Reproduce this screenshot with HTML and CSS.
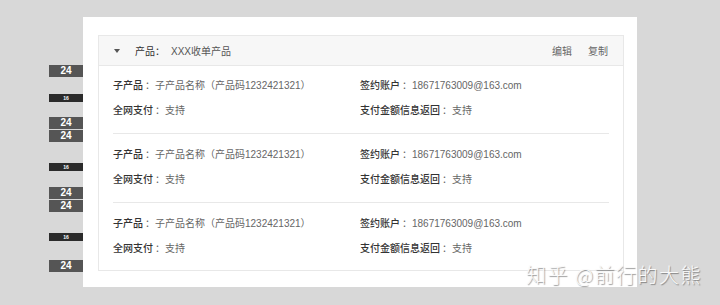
FILE: index.html
```html
<!DOCTYPE html>
<html lang="zh-CN">
<head>
    <meta charset="UTF-8">
    <meta name="viewport" content="width=device-width, initial-scale=1.0">
    <title>收单产品</title>
    <link rel="stylesheet" href="styles.css">
</head>
<body>
    <div class="page">
        <!-- 标注 -->
        <div class="marks">
            <span class="mark">24</span>
            <span class="mark small m17">16</span>
            <span class="mark m15">24</span>
            <span class="mark m1">24</span>
            <span class="mark small m21">16</span>
            <span class="mark m16">24</span>
            <span class="mark m1">24</span>
            <span class="mark small m21">16</span>
            <span class="mark m19">24</span>
        </div>

        <div class="card">
            <div class="panel">
                <div class="panel-head">
                    <span class="caret"></span>
                    <span class="head-label">产品：</span>
                    <span class="head-value">XXX收单产品</span>
                    <div class="actions">
                        <a>编辑</a>
                        <a>复制</a>
                    </div>
                </div>

                <div class="panel-body">
                    <div class="group">
                        <div class="field"><b>子产品</b><span class="sep">：</span>子产品名称（产品码1232421321）</div>
                        <div class="field"><b>签约账户</b><span class="sep">：</span>18671763009@163.com</div>
                        <div class="field"><b>全网支付</b><span class="sep">：</span>支持</div>
                        <div class="field"><b>支付金额信息返回</b><span class="sep">：</span>支持</div>
                    </div>
                    <div class="group">
                        <div class="field"><b>子产品</b><span class="sep">：</span>子产品名称（产品码1232421321）</div>
                        <div class="field"><b>签约账户</b><span class="sep">：</span>18671763009@163.com</div>
                        <div class="field"><b>全网支付</b><span class="sep">：</span>支持</div>
                        <div class="field"><b>支付金额信息返回</b><span class="sep">：</span>支持</div>
                    </div>
                    <div class="group">
                        <div class="field"><b>子产品</b><span class="sep">：</span>子产品名称（产品码1232421321）</div>
                        <div class="field"><b>签约账户</b><span class="sep">：</span>18671763009@163.com</div>
                        <div class="field"><b>全网支付</b><span class="sep">：</span>支持</div>
                        <div class="field"><b>支付金额信息返回</b><span class="sep">：</span>支持</div>
                    </div>
                </div>
            </div>
        </div>

        <div class="watermark">知乎 @前行的大熊</div>
    </div>
</body>
</html>
```

FILE: styles.css
```css
body {
    margin: 0;
    padding: 0;
    background-color: #d8d8d8;
    font-family: 'Liberation Sans', 'Noto Sans CJK SC', sans-serif;
    color: #666;
}
.page {
    position: relative;
    display: flex;
    align-items: flex-start;
    width: 720px;
    height: 305px;
    padding: 17px 0 0 49px;
    box-sizing: border-box;
}
/* 标注块 */
.marks {
    display: flex;
    flex-direction: column;
    width: 34px;
    margin-top: 48px;
}
.mark {
    display: block;
    height: 12px;
    line-height: 12px;
    background-color: #555;
    color: #fff;
    font-size: 10px;
    font-weight: bold;
    text-align: center;
}
.mark.small {
    height: 8px;
    line-height: 8px;
    font-size: 5px;
    background-color: #2b2b2b;
}
.m1 { margin-top: 1px; }
.m15 { margin-top: 15px; }
.m16 { margin-top: 16px; }
.m17 { margin-top: 17px; }
.m19 { margin-top: 19px; }
.m21 { margin-top: 21px; }

.card {
    width: 554px;
    height: 270px;
    padding: 18px 13px 0 15px;
    background-color: #fff;
    box-sizing: border-box;
}
.panel {
    border: 1px solid #e8e8e8;
}
.panel-head {
    display: flex;
    align-items: center;
    height: 29px;
    padding: 0 15px;
    background-color: #f7f7f7;
    border-bottom: 1px solid #e8e8e8;
    font-size: 10px;
}
.caret {
    width: 0;
    height: 0;
    border-left: 3.5px solid transparent;
    border-right: 3.5px solid transparent;
    border-top: 4px solid #555;
    margin-right: 15px;
}
.head-label {
    color: #333;
    margin-right: 6px;
}
.head-value {
    color: #555;
}
.actions {
    margin-left: auto;
    display: flex;
    gap: 16px;
}
.actions a {
    color: #666;
    cursor: pointer;
}
.panel-body {
    padding: 0 14px;
}
.group {
    display: grid;
    grid-template-columns: 247px 1fr;
    row-gap: 11px;
    padding: 14px 0 15px;
    border-bottom: 1px solid #e8e8e8;
    font-size: 10px;
    line-height: 14px;
}
.group:first-child {
    padding-top: 13px;
}
.group:last-child {
    border-bottom: none;
    padding-bottom: 14px;
}
.field {
    color: #666;
    white-space: nowrap;
}
.field b {
    color: #333;
    font-weight: 500;
}
/* 冒号稍微居中 */
.field .sep {
    padding-left: 2px;
}

.watermark {
    position: absolute;
    left: 526px;
    top: 262px;
    font-size: 20px;
    line-height: 26px;
    letter-spacing: 1.5px;
    font-weight: 300;
    color: #fafafa;
    text-shadow: 1px 1px 1px rgba(0, 0, 0, 0.4);
    font-family: 'Noto Sans CJK SC', sans-serif;
}
```
